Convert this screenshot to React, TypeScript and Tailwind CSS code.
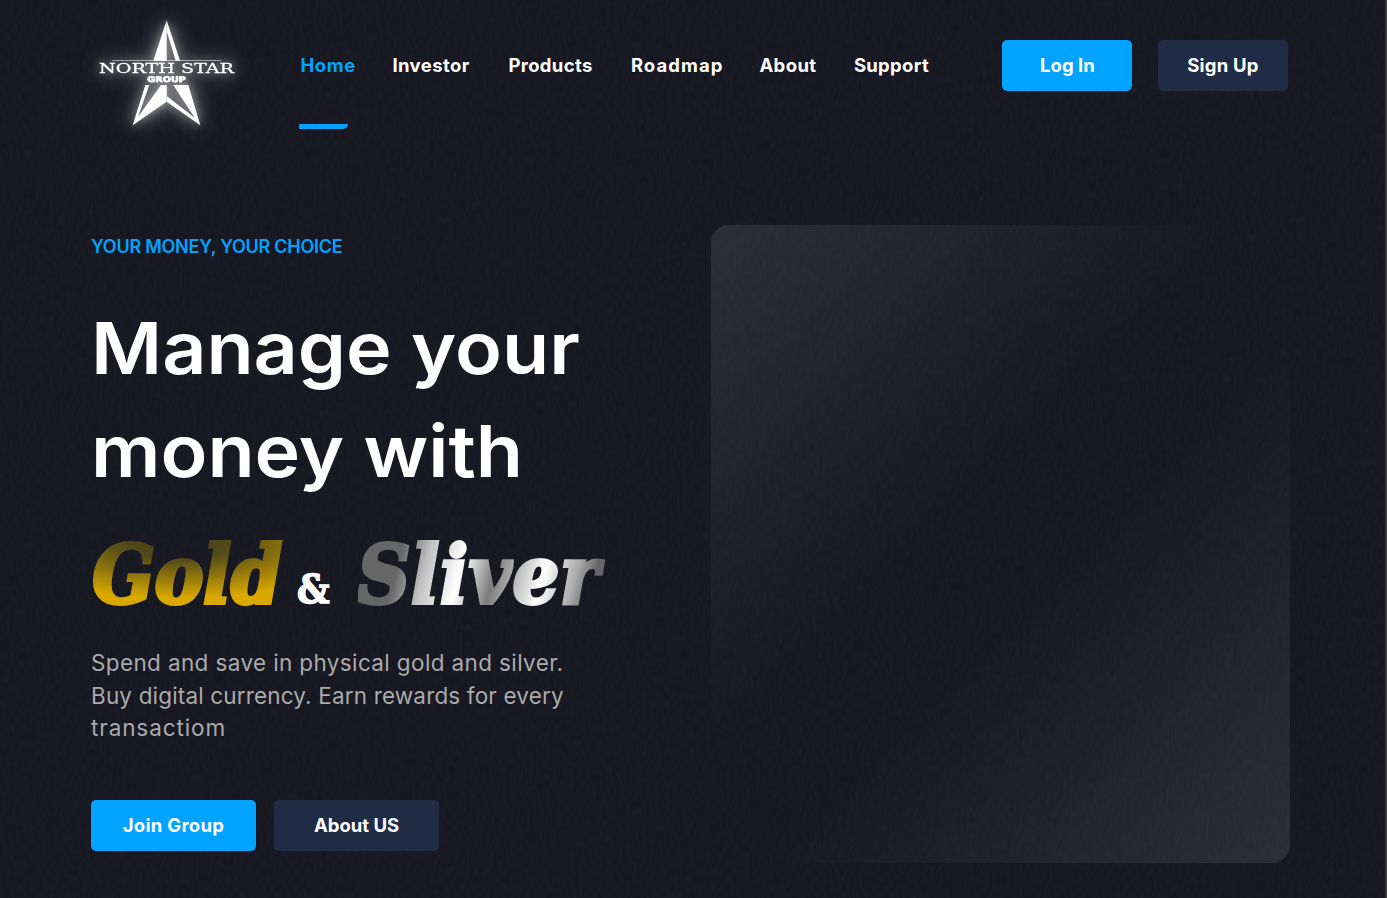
const navItems = [
  { label: "Home", box: "w-[92px]", text: "tracking-[0.6px] text-[#00a3ff]" },
  { label: "Investor", box: "w-[116px]", text: "tracking-[0.4px]" },
  { label: "Products", box: "w-[122.5px]", text: "tracking-[0.35px]" },
  { label: "Roadmap", box: "w-[128.5px]", text: "tracking-[1.05px]" },
  { label: "About", box: "w-[94.5px]", text: "tracking-[0.4px]" },
  { label: "Support", box: "w-[148.5px]", text: "tracking-[0.3px]" },
];

function Backdrop() {
  return (
    <svg className="pointer-events-none absolute inset-0 h-full w-full opacity-[0.035]" aria-hidden="true">
      <filter id="grain">
        <feTurbulence type="fractalNoise" baseFrequency="0.3 0.12" numOctaves={2} seed={4} />
        <feColorMatrix type="matrix" values="0 0 0 0 0.4  0 0 0 0 0.4  0 0 0 0 0.48  1.6 0 0 0 -0.45" />
      </filter>
      <rect width="100%" height="100%" filter="url(#grain)" />
    </svg>
  );
}

function Logo() {
  return (
    <svg
      viewBox="0 0 510 405"
      className="h-[135px] w-[170px] shrink-0 overflow-visible fill-white [filter:drop-shadow(0_0_5px_rgba(255,255,255,.4))_drop-shadow(0_0_10px_rgba(255,255,255,.55))]"
    >
      <path d="M260 46 L220 167 H260 Z" />
      <path d="M260 46 L300 167 H287 L261 82 Z" />
      <rect x="97" y="165" width="327" height="2.5" opacity=".65" />
      <path fillRule="evenodd" d="M196 240 H260 V290 L158 361 Z M208 240 L174 336 L243 240 Z" />
      <path fillRule="evenodd" d="M260 240 H325 L361 361 L260 290 Z M261 240 L261 274 L344 338 L280 240 Z" />
      <text x="57" y="204" textLength="405" lengthAdjust="spacingAndGlyphs" fontFamily="DejaVu Serif" fontSize="40" stroke="white" strokeWidth="0.8">NORTH STAR</text>
      <text x="202" y="230" textLength="116" lengthAdjust="spacingAndGlyphs" fontFamily="DejaVu Sans" fontWeight="700" fontSize="23" stroke="white" strokeWidth="2">GROUP</text>
    </svg>
  );
}

function Button({ label, className }: { label: string; className: string }) {
  return (
    <button className={`flex h-[51px] items-center justify-center rounded-[5px] text-[18.5px] font-bold leading-none ${className}`}>
      {label}
    </button>
  );
}

function Header() {
  return (
    <header className="relative flex h-[140px] pl-20 pt-[5px]">
      <Logo />
      <nav className="ml-[50.4px] flex pt-[49px] text-[18.5px] font-bold leading-[22px]">
        {navItems.map((item, i) => (
          <a key={item.label} className={`flex flex-col ${item.box} ${item.text}`}>
            {item.label}
            {i === 0 && <span className="-ml-px mt-[48px] h-[5px] w-[49px] rounded-br-[5px] bg-[#00a3ff]" />}
          </a>
        ))}
      </nav>
      <div className="flex gap-[25.5px] pt-[35px]">
        <Button label="Log In" className="w-[130px] bg-[#00a3ff]" />
        <Button label="Sign Up" className="w-[130px] bg-[#202c46] tracking-[0.2px]" />
      </div>
    </header>
  );
}

function Hero() {
  return (
    <main className="relative flex pl-[91px]">
      <section className="w-[620px] pt-[96px]">
        <p className="text-[18px] font-semibold leading-[22px] tracking-[-0.26px] text-[#00a3ff]">YOUR MONEY, YOUR CHOICE</p>
        <h1 className="-ml-[0.5px] mt-[38px] origin-left scale-x-[1.071] whitespace-nowrap text-[72px] font-semibold leading-[103px]">
          <span className="block">Manage your</span>
          <span className="block">money with</span>
        </h1>
        <div className="mt-[18px] flex h-[110px] items-baseline whitespace-nowrap font-['DejaVu_Serif_Condensed','DejaVu_Serif',serif] text-[81px] font-bold leading-[110px] font-stretch-condensed">
          <span className="ml-[1.5px] w-[204.5px] bg-[radial-gradient(185px_54px_at_85px_24px,#473f1a_0%,#524919_28%,#d9a900_100%)] bg-clip-text italic text-transparent [-webkit-text-stroke:4px_transparent]">
            Gold
          </span>
          <span className="w-[60.5px] text-[40px] leading-none [-webkit-text-stroke:1.5px_white]">&amp;</span>
          <span className="w-[260px] bg-[linear-gradient(105deg,#666_0px,#666_50px,#c4c4c4_78px,#fff_112px,#7c7c7c_145px,#fff_193px,#aaa_225px,#666_244px)] bg-clip-text italic tracking-[1.2px] text-transparent [-webkit-text-stroke:4px_transparent]">
            Sliver
          </span>
        </div>
        <p className="mt-[17px] whitespace-nowrap text-[22.5px] leading-[32.5px] text-[#aaaaac]">
          <span className="block tracking-[0.37px]">Spend and save in physical gold and silver.</span>
          <span className="block tracking-[0.16px]">Buy digital currency. Earn rewards for every</span>
          <span className="block tracking-[0.9px]">transactiom</span>
        </p>
        <div className="mt-[55px] flex gap-[18px]">
          <Button label="Join Group" className="w-[165px] bg-[#00a3ff] tracking-[0.3px]" />
          <Button label="About US" className="w-[165px] bg-[#202c46]" />
        </div>
      </section>
      <section className="mt-[85px] h-[638px] w-[579px] rounded-[18px] bg-[linear-gradient(135deg,rgba(255,255,255,.095)_0%,rgba(255,255,255,0)_43%,rgba(255,255,255,0)_57%,rgba(255,255,255,.095)_100%)]" />
    </main>
  );
}

export default function App() {
  return (
    <div className="relative h-[898px] w-full overflow-hidden border-r-2 border-[#3a3937] bg-[#161720] font-['Inter',sans-serif] text-white">
      <Backdrop />
      <Header />
      <Hero />
    </div>
  );
}
